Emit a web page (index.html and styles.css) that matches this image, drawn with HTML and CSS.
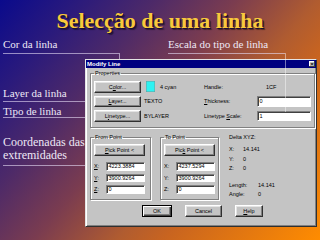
FILE: index.html
```html
<!DOCTYPE html>
<html lang="pt">
<head>
<meta charset="utf-8">
<title>Selecção de uma linha</title>
<link rel="stylesheet" href="styles.css">
</head>
<body>
<div class="slide">
  <h1 class="title">Selecção de uma linha</h1>
  <div class="toprow">
    <div class="callout cor">Cor da linha</div>
    <div class="callout escala">Escala do tipo de linha</div>
  </div>
  <div class="main">
    <div class="side">
      <div class="callout layer">Layer da linha</div>
      <div class="callout tipo">Tipo de linha</div>
      <div class="callout coord">Coordenadas das<br>extremidades</div>
    </div>
    <div class="dialog">
      <div class="titlebar"><span>Modify Line</span><span class="close">×</span></div>
      <div class="dbody">
        <fieldset class="group props">
          <legend>Properties</legend>
          <div class="props-grid">
            <button class="btn">C<u>o</u>lor...</button>
            <div class="val"><span class="swatch"></span>4 cyan</div>
            <div class="lbl">Handle:</div>
            <div class="plain">1CF</div>
            <button class="btn"><u>L</u>ayer...</button>
            <div class="val">TEXTO</div>
            <div class="lbl"><u>T</u>hickness:</div>
            <div class="input big">0</div>
            <button class="btn">L<u>i</u>netype...</button>
            <div class="val">BYLAYER</div>
            <div class="lbl">Linetype <u>S</u>cale:</div>
            <div class="input big">1</div>
          </div>
        </fieldset>
        <div class="lower">
          <fieldset class="group pt">
            <legend>From Point</legend>
            <button class="btn pick"><u>P</u>ick Point &lt;</button>
            <div class="xyz">
              <span><u>X</u>:</span><div class="input">4223.3884</div>
              <span><u>Y</u>:</span><div class="input">3900.9264</div>
              <span><u>Z</u>:</span><div class="input">0</div>
            </div>
          </fieldset>
          <fieldset class="group pt to">
            <legend>To Point</legend>
            <button class="btn pick">Pic<u>k</u> Point &lt;</button>
            <div class="xyz">
              <span>X:</span><div class="input">4237.5294</div>
              <span>Y:</span><div class="input">3900.9264</div>
              <span>Z:</span><div class="input">0</div>
            </div>
          </fieldset>
          <div class="delta">
            <div class="head">Delta XYZ:</div>
            <div class="dgrid">
              <span>X:</span><span>14.141</span>
              <span>Y:</span><span>0</span>
              <span>Z:</span><span>0</span>
            </div>
            <div class="lgrid">
              <span>Length:</span><span>14.141</span>
              <span>Angle:</span><span>0</span>
            </div>
          </div>
        </div>
        <div class="actions">
          <button class="btn ok">OK</button>
          <button class="btn cancel">Cancel</button>
          <button class="btn help"><u>H</u>elp</button>
        </div>
      </div>
    </div>
  </div>
  <span class="vline v1"></span>
  <span class="vline v2"></span>
</div>
</body>
</html>
```

FILE: styles.css
```css
* { box-sizing: border-box; }
html, body { margin: 0; padding: 0; }
body {
  width: 320px;
  height: 240px;
  overflow: hidden;
  font-family: "Liberation Serif", serif;
}
.slide {
  position: relative;
  width: 320px;
  height: 240px;
  background: linear-gradient(130deg, #0a0a8c 0%, #2a1a7c 15%, #4e2a68 30%, #7a3c50 45%, #b05c30 61%, #c86420 70%, #ff8c00 100%);
}
.title {
  margin: 0;
  padding-top: 9px;
  height: 33px;
  font: bold 22px/24px "Liberation Serif", serif;
  color: #f8c93c;
  text-align: center;
  text-shadow: 1px 1px 0 #1a1030, 2px 2px 1px rgba(0, 0, 0, 0.45);
}
.toprow {
  display: flex;
  height: 26px;
  padding-top: 5.3px;
}
.callout {
  font: 11px/13px "Liberation Serif", serif;
  color: #eee8f6;
  border-bottom: 1px solid rgba(232, 222, 246, 0.6);
  white-space: nowrap;
}
.cor { margin-left: 3px; width: 116px; padding-bottom: 1.5px; align-self: flex-start; }
.escala { margin-left: 49px; width: 117px; padding-bottom: 1.5px; align-self: flex-start; }
.main { display: flex; }
.side { width: 85px; flex: none; }
.side .callout { margin-left: 3px; width: 82px; }
.layer { margin-top: 27.8px; padding-bottom: 1px; }
.tipo { margin-top: 3px; line-height: 12px; }
.coord { margin-top: 18.2px; padding-bottom: 3px; font-size: 12px; }

.dialog {
  width: 232px;
  height: 168px;
  flex: none;
  background: #c4c4c4;
  border: 1px solid;
  border-color: #e4e4e4 #303030 #303030 #e4e4e4;
  box-shadow: inset 1px 1px #fff, inset -1px -1px #808080;
  font: 5.5px/6px "Liberation Sans", Arial, sans-serif;
  color: #000;
}
.titlebar {
  height: 8px;
  background: #000080;
  color: #fff;
  font-weight: bold;
  font-size: 6px;
  line-height: 8px;
  display: flex;
  justify-content: space-between;
  align-items: center;
  padding-left: 1px;
}
.close {
  width: 6px;
  height: 6px;
  margin-right: 1px;
  background: #c4c4c4;
  color: #000;
  font-size: 6px;
  line-height: 6px;
  text-align: center;
  box-shadow: inset -1px -1px #404040, inset 1px 1px #fff;
}
.dbody { padding-left: 4px; }
.group {
  margin: 0;
  min-width: 0;
  border: 1px solid #808080;
  box-shadow: inset 1px 1px #fff, 1px 1px #fff;
}
legend {
  padding: 0 1px;
  font-size: 5.5px;
  line-height: 6px;
}
.btn {
  font: inherit;
  color: #000;
  padding: 0;
  margin: 0;
  background: #c4c4c4;
  border: 1px solid;
  border-color: #fff #303030 #303030 #fff;
  box-shadow: inset -1px -1px #808080, inset 1px 1px #e4e4e4;
  white-space: nowrap;
}
u { text-decoration-thickness: 0.5px; text-underline-offset: 0.5px; }
.props {
  margin-top: 2px;
  width: 225px;
  padding: 5px 3px 5px 3px;
}
.props-grid {
  display: grid;
  grid-template-columns: 47px 63px 53px 54px;
  grid-template-rows: repeat(3, 11.5px);
  row-gap: 3px;
  align-items: center;
}
.props-grid .btn { height: 11.5px; }
.val {
  padding-left: 3px;
  display: flex;
  align-items: center;
  height: 11.5px;
}
.swatch {
  width: 9px;
  height: 11px;
  margin-left: 2px;
  margin-right: 5px;
  background: #2ef2f2;
  box-shadow: inset 0 0 0 0.5px #6a9a9a;
}
.plain { padding-left: 9px; }
.input {
  height: 8.5px;
  background: #fff;
  border: 1px solid;
  border-color: #808080 #fff #fff #808080;
  box-shadow: inset 1px 1px #404040;
  padding-left: 1.5px;
  display: flex;
  align-items: center;
  white-space: nowrap;
  overflow: hidden;
}
.input.big { height: 10.5px; }
.lower {
  display: flex;
  gap: 9px;
  margin-top: 6.5px;
}
.pt { width: 61px; padding: 4px 3px 3.5px 3px; }
.pt.to { width: 59px; }
.pick { display: block; width: 51px; height: 12px; }
.xyz {
  display: grid;
  grid-template-columns: 12px 39px;
  grid-auto-rows: 8.5px;
  row-gap: 3px;
  margin-top: 6px;
  align-items: center;
}
.delta { padding-left: 1px; }
.head { line-height: 6px; }
.dgrid {
  display: grid;
  grid-template-columns: 14px auto;
  line-height: 9.5px;
  margin-top: 5px;
}
.lgrid {
  display: grid;
  grid-template-columns: 29px auto;
  line-height: 9.5px;
  margin-top: 7px;
}
.actions {
  display: flex;
  gap: 13px;
  margin: 5px 0 0 52px;
}
.actions .btn { height: 12px; }
.ok {
  width: 30px;
  border-color: #000;
  box-shadow: inset 1px 1px #fff, inset -1px -1px #404040, inset -2px -2px #808080;
}
.cancel { width: 37px; }
.help { width: 28px; }
.vline {
  position: absolute;
  width: 1px;
  background: rgba(236, 228, 248, 0.6);
}
.v1 { left: 119px; top: 53px; height: 6px; }
.v2 { left: 285px; top: 53px; height: 59px; background: rgba(255, 255, 255, 0.45); }
```
